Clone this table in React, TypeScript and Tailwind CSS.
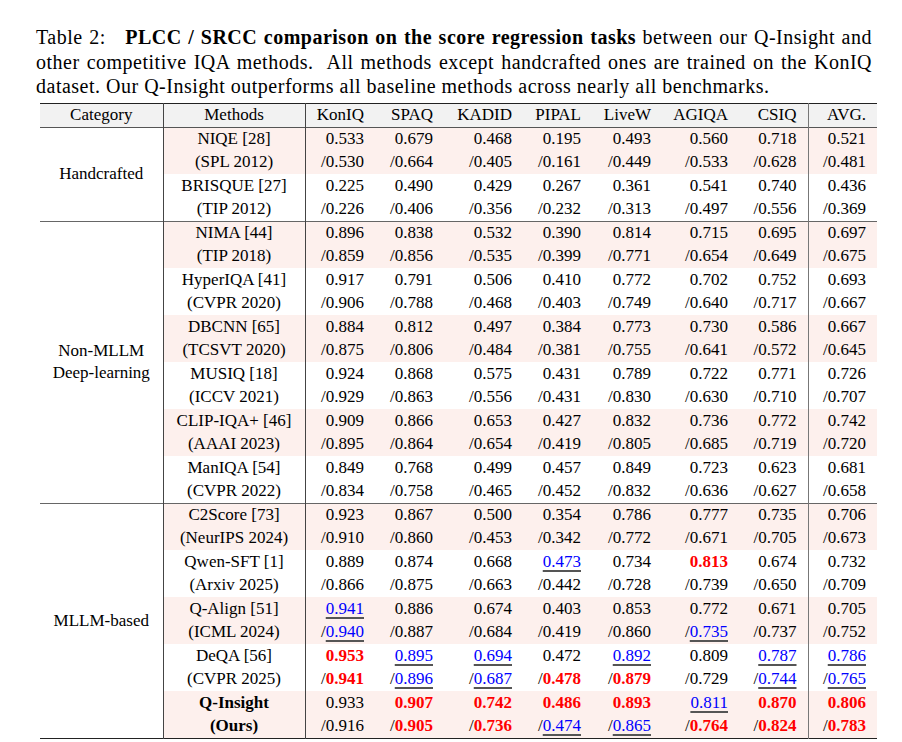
import React from "react";

type Group = {
  category: string[];
  methods: { name: string; venue: string; bold?: boolean; plcc: string[]; srcc: string[] }[];
};

// "b:" = best (red bold), "u:" = second best (blue underlined)
const groups: Group[] = [
  {
    category: ["Handcrafted"],
    methods: [
      { name: "NIQE [28]", venue: "(SPL 2012)", plcc: ["0.533", "0.679", "0.468", "0.195", "0.493", "0.560", "0.718", "0.521"], srcc: ["0.530", "0.664", "0.405", "0.161", "0.449", "0.533", "0.628", "0.481"] },
      { name: "BRISQUE [27]", venue: "(TIP 2012)", plcc: ["0.225", "0.490", "0.429", "0.267", "0.361", "0.541", "0.740", "0.436"], srcc: ["0.226", "0.406", "0.356", "0.232", "0.313", "0.497", "0.556", "0.369"] },
    ],
  },
  {
    category: ["Non-MLLM", "Deep-learning"],
    methods: [
      { name: "NIMA [44]", venue: "(TIP 2018)", plcc: ["0.896", "0.838", "0.532", "0.390", "0.814", "0.715", "0.695", "0.697"], srcc: ["0.859", "0.856", "0.535", "0.399", "0.771", "0.654", "0.649", "0.675"] },
      { name: "HyperIQA [41]", venue: "(CVPR 2020)", plcc: ["0.917", "0.791", "0.506", "0.410", "0.772", "0.702", "0.752", "0.693"], srcc: ["0.906", "0.788", "0.468", "0.403", "0.749", "0.640", "0.717", "0.667"] },
      { name: "DBCNN [65]", venue: "(TCSVT 2020)", plcc: ["0.884", "0.812", "0.497", "0.384", "0.773", "0.730", "0.586", "0.667"], srcc: ["0.875", "0.806", "0.484", "0.381", "0.755", "0.641", "0.572", "0.645"] },
      { name: "MUSIQ [18]", venue: "(ICCV 2021)", plcc: ["0.924", "0.868", "0.575", "0.431", "0.789", "0.722", "0.771", "0.726"], srcc: ["0.929", "0.863", "0.556", "0.431", "0.830", "0.630", "0.710", "0.707"] },
      { name: "CLIP-IQA+ [46]", venue: "(AAAI 2023)", plcc: ["0.909", "0.866", "0.653", "0.427", "0.832", "0.736", "0.772", "0.742"], srcc: ["0.895", "0.864", "0.654", "0.419", "0.805", "0.685", "0.719", "0.720"] },
      { name: "ManIQA [54]", venue: "(CVPR 2022)", plcc: ["0.849", "0.768", "0.499", "0.457", "0.849", "0.723", "0.623", "0.681"], srcc: ["0.834", "0.758", "0.465", "0.452", "0.832", "0.636", "0.627", "0.658"] },
    ],
  },
  {
    category: ["MLLM-based"],
    methods: [
      { name: "C2Score [73]", venue: "(NeurIPS 2024)", plcc: ["0.923", "0.867", "0.500", "0.354", "0.786", "0.777", "0.735", "0.706"], srcc: ["0.910", "0.860", "0.453", "0.342", "0.772", "0.671", "0.705", "0.673"] },
      { name: "Qwen-SFT [1]", venue: "(Arxiv 2025)", plcc: ["0.889", "0.874", "0.668", "u:0.473", "0.734", "b:0.813", "0.674", "0.732"], srcc: ["0.866", "0.875", "0.663", "0.442", "0.728", "0.739", "0.650", "0.709"] },
      { name: "Q-Align [51]", venue: "(ICML 2024)", plcc: ["u:0.941", "0.886", "0.674", "0.403", "0.853", "0.772", "0.671", "0.705"], srcc: ["u:0.940", "0.887", "0.684", "0.419", "0.860", "u:0.735", "0.737", "0.752"] },
      { name: "DeQA [56]", venue: "(CVPR 2025)", plcc: ["b:0.953", "u:0.895", "u:0.694", "0.472", "u:0.892", "0.809", "u:0.787", "u:0.786"], srcc: ["b:0.941", "u:0.896", "u:0.687", "b:0.478", "b:0.879", "0.729", "u:0.744", "u:0.765"] },
      { name: "Q-Insight", venue: "(Ours)", bold: true, plcc: ["0.933", "b:0.907", "b:0.742", "b:0.486", "b:0.893", "u:0.811", "b:0.870", "b:0.806"], srcc: ["0.916", "b:0.905", "b:0.736", "u:0.474", "u:0.865", "b:0.764", "b:0.824", "b:0.783"] },
    ],
  },
];

const cols = ["KonIQ", "SPAQ", "KADID", "PIPAL", "LiveW", "AGIQA", "CSIQ", "AVG."];
const widths = ["w-[70px]", "w-[69px]", "w-[79px]", "w-[69px]", "w-[70px]", "w-[77px]", "w-[69px]", "w-[69px]"];

function Score({ v }: { v: string }) {
  if (v.startsWith("b:")) return <span className="font-bold text-[#ff0000]">{v.slice(2)}</span>;
  if (v.startsWith("u:"))
    return (
      <span className="text-[#0000ff] underline decoration-[#555] decoration-[1.5px] underline-offset-[3px]">{v.slice(2)}</span>
    );
  return <span>{v}</span>;
}

export default function App() {
  return (
    <div className="w-[902px] h-[742px] bg-white text-black overflow-hidden font-['Liberation_Serif','Times_New_Roman',serif]">
      <div className="pt-[25px] pl-[36px] w-[872px] text-[20px] leading-[24.5px] tracking-[0.5px]">
        <div className="text-justify [text-align-last:justify]">
          Table 2:&nbsp;&nbsp; <b>PLCC / SRCC comparison on the score regression tasks</b> between our Q-Insight and
        </div>
        <div className="text-justify [text-align-last:justify]">
          other competitive IQA methods.&nbsp; All methods except handcrafted ones are trained on the KonIQ
        </div>
        <div>dataset. Our Q-Insight outperforms all baseline methods across nearly all benchmarks.</div>
      </div>

      <table className="mt-[4px] ml-[40px] border-collapse table-fixed w-[837px] text-[17px]">
        <colgroup>
          <col className="w-[123px]" />
          <col className="w-[142px]" />
          {widths.map((w, i) => (
            <col key={i} className={w} />
          ))}
        </colgroup>
        <thead>
          <tr className="bg-[#f2f2f2] h-[24px] border-t-[1.5px] border-b border-t-[#222] border-b-[#555]">
            <th className="font-normal text-center border-r border-r-[#444] leading-[22px] p-0">Category</th>
            <th className="font-normal text-center border-r border-r-[#444] leading-[22px] p-0">Methods</th>
            {cols.map((c, i) => (
              <th key={c} className={`font-normal text-right pr-[11px] leading-[22px] p-0 ${i === 6 ? "border-r border-r-[#777]" : ""}`}>
                {c}
              </th>
            ))}
          </tr>
        </thead>
        <tbody>
          {groups.map((g, gi) =>
            g.methods.flatMap((m, mi) => {
              const pink = mi % 2 === 0;
              const rowBg = pink ? "bg-[#fdf0ed]" : "bg-white";
              const isLastGroup = gi === groups.length - 1;
              const isLastRow = mi === g.methods.length - 1;
              return [0, 1].map((r) => {
                const topRule = r === 0 && mi === 0 && gi > 0 ? "border-t border-t-[#666]" : "";
                const bottomRule = r === 1 && isLastRow && isLastGroup ? "border-b-[1.5px] border-b-[#222]" : "";
                const values = r === 0 ? m.plcc : m.srcc;
                return (
                  <tr key={`${gi}-${mi}-${r}`} className={`h-[23.5px] ${topRule} ${bottomRule}`}>
                    {r === 0 && mi === 0 && (
                      <td rowSpan={g.methods.length * 2} className="bg-white text-center align-middle border-r border-r-[#444] leading-[22px] p-0">
                        {g.category.map((l) => (
                          <div key={l}>{l}</div>
                        ))}
                      </td>
                    )}
                    <td className={`${rowBg} text-center border-r border-r-[#444] leading-[22px] p-0 whitespace-nowrap ${m.bold ? "font-bold" : ""}`}>
                      {r === 0 ? m.name : m.venue}
                    </td>
                    {values.map((v, vi) => (
                      <td
                        key={vi}
                        className={`${rowBg} text-right pr-[11px] leading-[22px] p-0 whitespace-nowrap ${vi === 6 ? "border-r border-r-[#777]" : ""}`}
                      >
                        {r === 1 && "/"}
                        <Score v={v} />
                      </td>
                    ))}
                  </tr>
                );
              });
            })
          )}
        </tbody>
      </table>
    </div>
  );
}
